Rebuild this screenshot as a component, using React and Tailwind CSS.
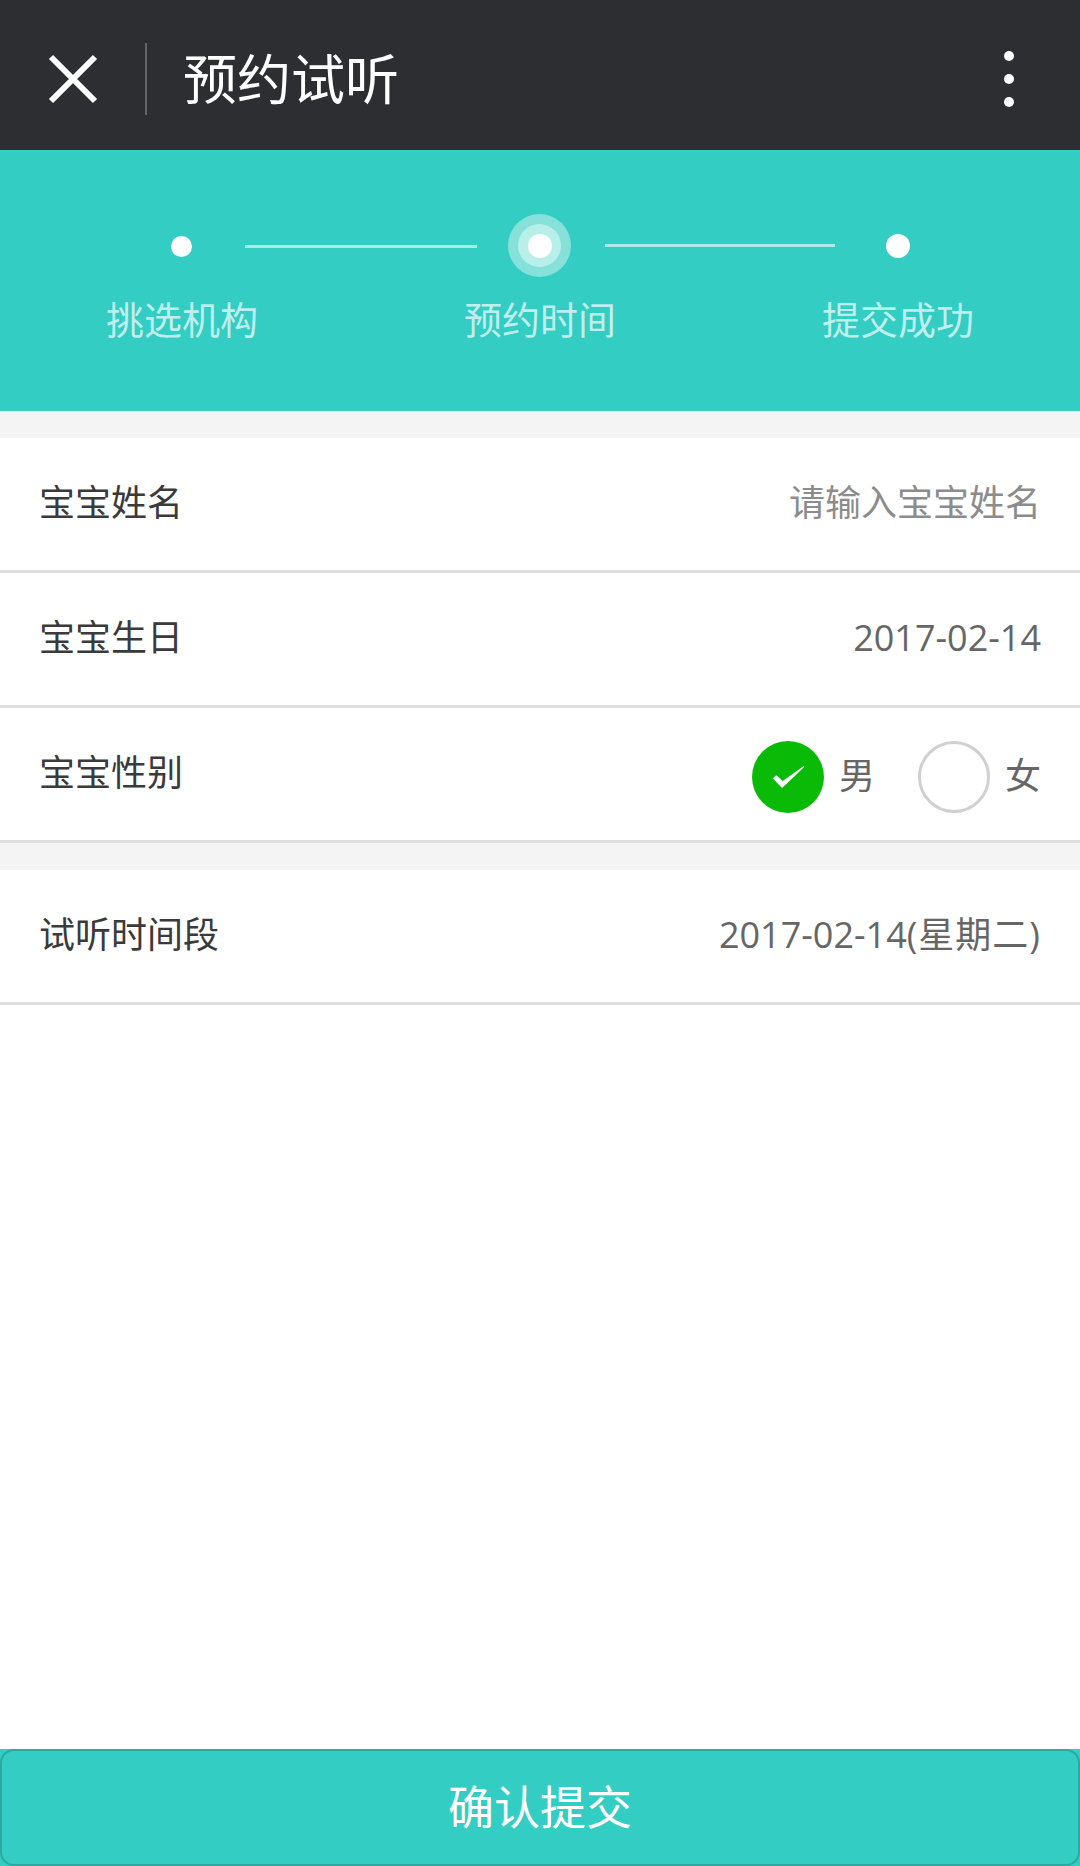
import React from "react";

const font = "font-['Open_Sans','Noto_Sans_CJK_SC',sans-serif]";

function Row({ label, children }) {
  return (
    <div className="flex h-[135px] items-center justify-between border-b-[3px] border-[#dedede] bg-white pb-[2px] pl-[39px] pr-[39px]">
      <span className="text-[36px] leading-[48px] text-[#3a3a3a]">{label}</span>
      {children}
    </div>
  );
}

function Dot({ className }) {
  return <div className={`shrink-0 rounded-full bg-white ${className}`} />;
}

export default function App() {
  return (
    <div className={`flex min-h-[1866px] w-[1080px] flex-col overflow-hidden bg-white ${font}`}>
      <header className="flex h-[150px] items-center bg-[#2d2e32] pt-[7px]">
        <svg className="ml-[48px] shrink-0" width="50" height="50" viewBox="0 0 50 50" fill="none">
          <path d="M3 3 L47 47 M47 3 L3 47" stroke="#ffffff" strokeWidth="6" />
        </svg>
        <div className="ml-[47px] h-[72px] w-[2px] bg-[#636467]" />
        <h1 className="ml-[36px] text-[54px] font-normal leading-none text-white">预约试听</h1>
        <div className="ml-auto mr-[66px] flex flex-col gap-[13px]">
          <Dot className="h-[10px] w-[10px]" />
          <Dot className="h-[10px] w-[10px]" />
          <Dot className="h-[10px] w-[10px]" />
        </div>
      </header>

      <section className="h-[261px] bg-[#33cdc3] pt-[64px]">
        <div className="flex h-[63px] items-center pl-[171px]">
          <Dot className="h-[21px] w-[21px] translate-y-[1px]" />
          <div className="ml-[53px] h-[3px] w-[232px] translate-y-[1px] bg-white/60" />
          <div className="ml-[31px] flex h-[63px] w-[63px] shrink-0 items-center justify-center rounded-full bg-[#85e1da]">
            <div className="flex h-[43px] w-[43px] items-center justify-center rounded-full bg-[#b8efea]">
              <Dot className="h-[24px] w-[24px]" />
            </div>
          </div>
          <div className="ml-[34px] h-[3px] w-[230px] bg-white/60" />
          <Dot className="ml-[51px] h-[24px] w-[24px]" />
        </div>
        <div className="mt-[16px] flex justify-center gap-[206px] text-[38px] font-normal leading-[52px] text-white/70">
          <span>挑选机构</span>
          <span>预约时间</span>
          <span>提交成功</span>
        </div>
      </section>

      <div className="h-[27px] bg-[#f4f4f4]" />

      <Row label="宝宝姓名">
        <span className="text-[36px] leading-[48px] text-[#8c8c8c]">请输入宝宝姓名</span>
      </Row>
      <Row label="宝宝生日">
        <span className="text-[36px] leading-[48px] text-[#666666]">2017-02-14</span>
      </Row>
      <Row label="宝宝性别">
        <div className="flex translate-y-[4px] items-center text-[36px] leading-[48px] text-[#666666]">
          <div className="flex h-[72px] w-[72px] items-center justify-center rounded-full bg-[#09bb07]">
            <svg width="72" height="72" viewBox="0 0 72 72">
              <polygon points="20.7,37.3 24.3,34.3 30.7,40 51.7,25 52,26.3 30,47" fill="#ffffff" />
            </svg>
          </div>
          <span className="ml-[15px] -translate-y-[1px]">男</span>
          <div className="ml-[43px] h-[72px] w-[72px] rounded-full border-[3px] border-[#d0d0d0]" />
          <span className="ml-[15px] -translate-y-[1px]">女</span>
        </div>
      </Row>

      <div className="h-[27px] bg-[#f4f4f4]" />

      <Row label="试听时间段">
        <span className="text-[36px] leading-[48px] text-[#666666]">
          2017-02-14<span className="tracking-[1px]">(星期二)</span>
        </span>
      </Row>

      <div className="mt-auto bg-[#33cdc3]">
        <button className="flex h-[117px] w-full items-center justify-center rounded-[14px] border-2 border-[#2ea9a1] bg-[#33cdc3] pb-[4px] text-[46px] font-normal leading-none text-white">
          确认提交
        </button>
      </div>
    </div>
  );
}
